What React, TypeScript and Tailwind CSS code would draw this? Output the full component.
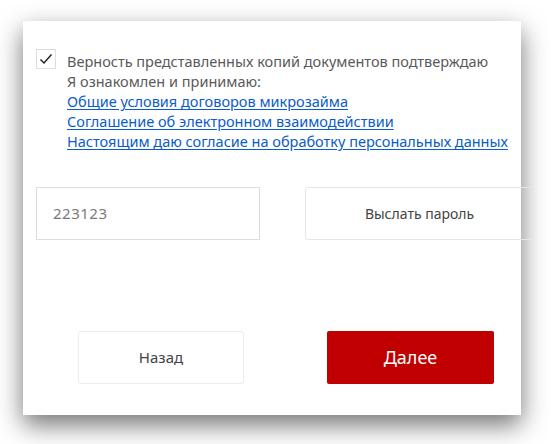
import React from 'react';

export default function App() {
  const links = [
    "Общие условия договоров микрозайма",
    "Соглашение об электронном взаимодействии",
    "Настоящим даю согласие на обработку персональных данных",
  ];

  return (
    <div className="w-[551px] h-[444px] bg-white pt-[21px] pl-[23px] overflow-hidden" style={{ fontFamily: '"Noto Sans", sans-serif' }}>
      <div className="w-[498px] h-[394px] bg-white shadow-[0_10px_24px_rgba(0,0,0,0.55)] pt-[28px] pl-[13px]">
        {/* agreement */}
        <div className="flex items-start gap-[11px]">
          <div className="w-[20px] h-[20px] border border-[#dddddd] flex items-center justify-center shrink-0">
            <svg width="14" height="12" viewBox="0 0 14 12" fill="none">
              <path d="M1.5 6.5 L5 10 L12.5 1.5" stroke="#222" strokeWidth="1.5" />
            </svg>
          </div>
          <div className="pt-[2px] text-[14.5px] leading-[20px] text-[#5a5a5a] whitespace-nowrap">
            <div>Верность представленных копий документов подтверждаю</div>
            <div>Я ознакомлен и принимаю:</div>
            {links.map((l, i) => (
              <div key={i}>
                <a href="#" className="text-[#0b5cc8] underline underline-offset-2">{l}</a>
              </div>
            ))}
          </div>
        </div>

        {/* code row */}
        <div className="flex mt-[36px] gap-[45px]">
          <div className="w-[224px] h-[53px] shrink-0 border border-[#dcdcdc] flex items-center pl-[16px] text-[15px] text-[#7a7a7a] tracking-[0.5px]">
            223123
          </div>
          <button className="w-[229px] h-[53px] shrink-0 border border-[#e6e6e6] rounded-[3px] bg-transparent text-[14px] text-[#444]">
            Выслать пароль
          </button>
        </div>

        {/* actions */}
        <div className="flex mt-[91px] pl-[42px] gap-[83px]">
          <button className="w-[166px] h-[53px] shrink-0 border border-[#ececec] rounded-[3px] bg-white text-[15px] text-[#444]">
            Назад
          </button>
          <button className="w-[167px] h-[53px] shrink-0 rounded-[2px] bg-[#c00000] text-[18px] text-white">
            Далее
          </button>
        </div>
      </div>
    </div>
  );
}
